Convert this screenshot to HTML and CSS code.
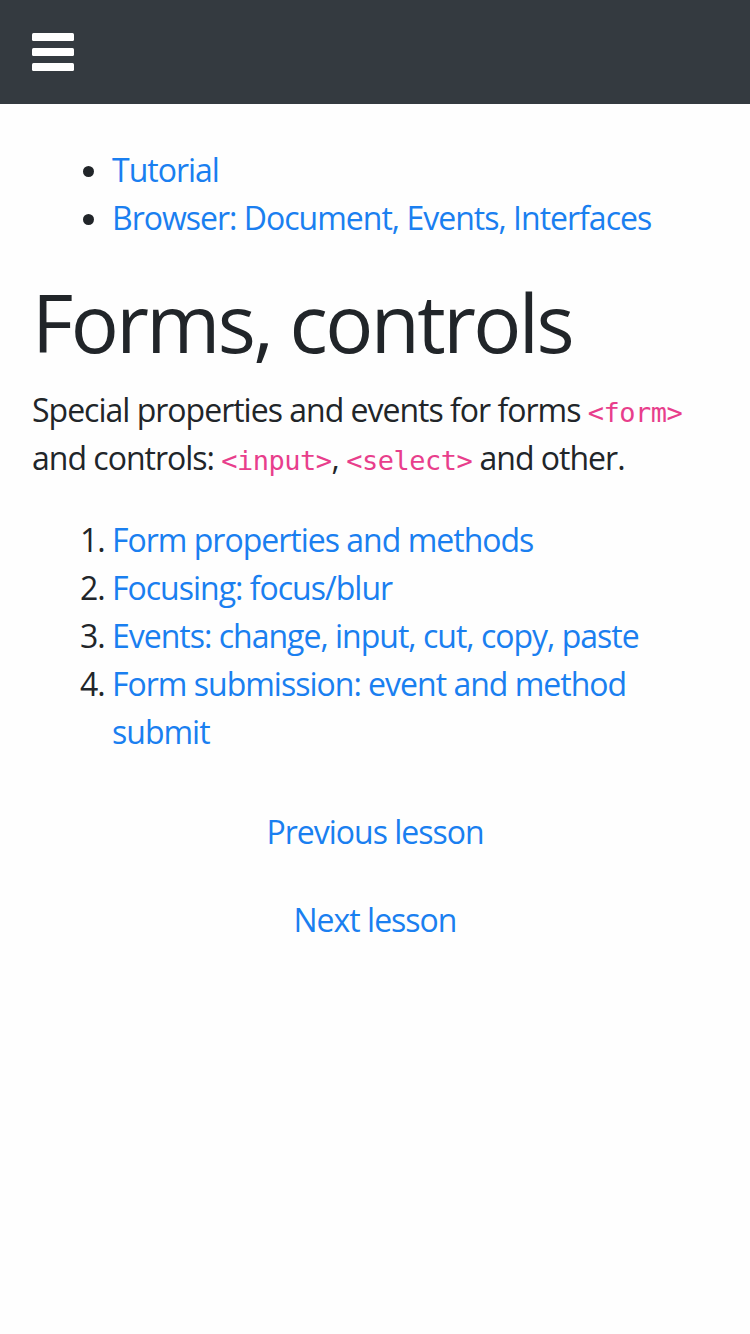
FILE: index.html
```html
<!DOCTYPE html>
<html lang="en">
<head>
    <meta charset="UTF-8">
    <meta name="viewport" content="width=device-width, initial-scale=1.0">
    <title>Forms, controls</title>
    <link rel="stylesheet" href="styles.css">
</head>
<body>
    <nav class="navbar">
        <button class="menu-toggle" aria-label="Menu">
            <svg width="42" height="38" viewBox="0 0 42 38">
                <rect x="0" y="0" width="42" height="8" rx="1.5" fill="#fff"/>
                <rect x="0" y="15" width="42" height="8" rx="1.5" fill="#fff"/>
                <rect x="0" y="30" width="42" height="8" rx="1.5" fill="#fff"/>
            </svg>
        </button>
    </nav>

    <main class="content">
        <ul class="breadcrumbs">
            <li><a href="#">Tutorial</a></li>
            <li><a href="#">Browser: Document, Events, Interfaces</a></li>
        </ul>

        <h1>Forms, controls</h1>
        <p>Special properties and events for forms <code>&lt;form&gt;</code> and controls: <code>&lt;input&gt;</code>, <code>&lt;select&gt;</code> and other.</p>

        <ol class="lessons">
            <li><a href="#">Form properties and methods</a></li>
            <li><a href="#">Focusing: focus/blur</a></li>
            <li><a href="#">Events: change, input, cut, copy, paste</a></li>
            <li><a href="#">Form submission: event and method submit</a></li>
        </ol>

        <div class="pager">
            <a href="#">Previous lesson</a>
            <a href="#">Next lesson</a>
        </div>
    </main>
</body>
</html>
```
FILE: styles.css
```css
body {
    margin: 0;
    background: #fefefe;
    color: #212529;
    font-family: "Open Sans", "Noto Sans", sans-serif;
    font-size: 32px;
    line-height: 1.5;
    letter-spacing: -1px;
}
a {
    color: #1a7ff0;
    text-decoration: none;
}
.navbar {
    height: 104px;
    background: #343a40;
    display: flex;
    align-items: center;
    padding: 0 32px;
}
.menu-toggle {
    background: none;
    border: none;
    padding: 0;
    display: flex;
}
.content {
    padding: 42px 32px 0;
}
.breadcrumbs {
    margin: 0 0 32px;
    padding-left: 80px;
}
h1 {
    font-weight: 400;
    font-size: 80px;
    line-height: 1.2;
    letter-spacing: -2.6px;
    margin: 0 0 16px;
}
p {
    margin: 0 0 34px;
}
code {
    font-family: "DejaVu Sans Mono", monospace;
    font-size: 27px;
    line-height: 1;
    letter-spacing: -0.5px;
    color: #e83e8c;
}
.lessons {
    margin: 0;
    padding-left: 80px;
}
.pager {
    display: flex;
    flex-direction: column;
    align-items: center;
    gap: 40px;
    margin-top: 52px;
}
```
